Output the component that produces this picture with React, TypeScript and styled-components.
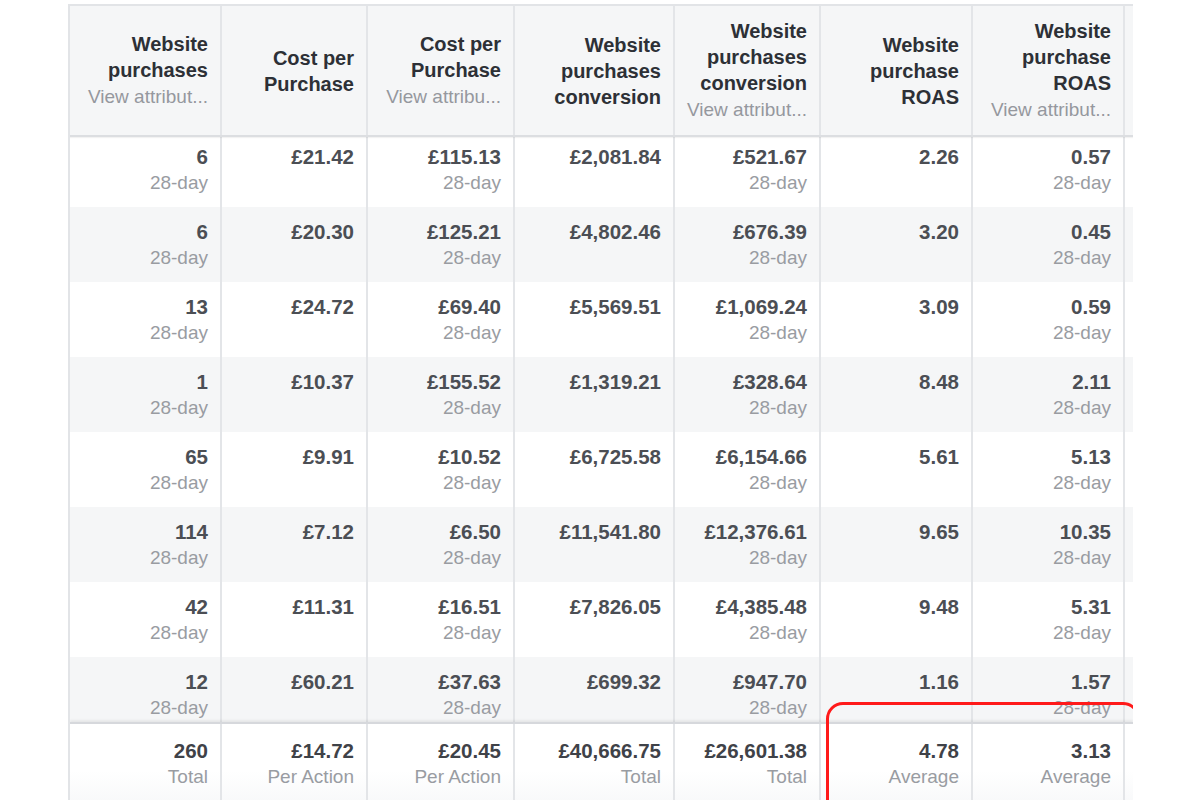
import React from "react";
import styled, { createGlobalStyle } from "styled-components";

const Global = createGlobalStyle`
  html, body { margin: 0; padding: 0; background: #ffffff; }
  body { font-family: "Liberation Sans", Arial, sans-serif; }
`;

const COLS = "152px 146px 147px 160px 146px 152px 152px 1fr";

const Page = styled.div`
  width: 1200px;
  height: 800px;
  overflow: hidden;
  padding: 4px 0 0 68px;
  box-sizing: border-box;
`;

const Table = styled.div`
  position: relative;
  width: 1065px;
  height: 796px;
  overflow: hidden;
  border-top: 2px solid #e2e4e7;
  border-left: 2px solid #e2e4e7;
  box-sizing: border-box;
`;

const HeaderRow = styled.div`
  display: grid;
  grid-template-columns: ${COLS};
  height: 131px;
  background: #f5f6f7;
  border-bottom: 2px solid #dcdee1;
  box-shadow: 0 1px 1px rgba(0, 0, 0, 0.05);
  box-sizing: border-box;
  position: relative;
  z-index: 1;
`;

const HeadCell = styled.div`
  display: flex;
  flex-direction: column;
  justify-content: center;
  align-items: flex-end;
  text-align: right;
  padding: 0 12px 0 8px;
  border-right: 2px solid #e3e5e8;
  box-sizing: border-box;
`;

const HeadTitle = styled.div`
  font-weight: 700;
  font-size: 20px;
  line-height: 26px;
  color: #2d3036;
`;

const HeadSub = styled.div`
  font-size: 19px;
  line-height: 27px;
  color: #95989e;
  white-space: nowrap;
`;

const Row = styled.div<{ $alt: boolean; $h: number; $pad: number }>`
  display: grid;
  grid-template-columns: ${COLS};
  height: ${(p) => p.$h}px;
  background: ${(p) => (p.$alt ? "#f5f6f7" : "#ffffff")};
  box-sizing: border-box;
  & > div {
    padding-top: ${(p) => p.$pad}px;
  }
`;

const Cell = styled.div`
  display: flex;
  flex-direction: column;
  align-items: flex-end;
  text-align: right;
  padding-right: 12px;
  border-right: 2px solid #e3e5e8;
  box-sizing: border-box;
`;

const Value = styled.div<{ $strong?: boolean }>`
  font-weight: 700;
  font-size: 20.5px;
  line-height: 26px;
  color: ${(p) => (p.$strong ? "#3f4248" : "#4b4e54")};
`;

const Sub = styled.div`
  font-size: 19px;
  line-height: 26px;
  color: #999ca2;
`;

const Footer = styled.div`
  display: grid;
  grid-template-columns: ${COLS};
  height: 80px;
  background: linear-gradient(#ffffff 60%, #f8f9fa);
  border-top: 2px solid #d6d8dc;
  box-shadow: 0 -2px 2px rgba(0, 0, 0, 0.06);
  box-sizing: border-box;
  position: relative;
  & > div {
    padding-top: 14px;
  }
`;

const Highlight = styled.div`
  position: absolute;
  left: 756px;
  top: 696px;
  width: 314px;
  height: 160px;
  border: 3px solid #ff1a1a;
  border-radius: 17px;
  box-sizing: border-box;
  pointer-events: none;
  z-index: 3;
`;

type Col = { title: string[]; sub?: boolean };

const headers: Col[] = [
  { title: ["Website", "purchases"], sub: true },
  { title: ["Cost per", "Purchase"] },
  { title: ["Cost per", "Purchase"], sub: true },
  { title: ["Website", "purchases", "conversion"] },
  { title: ["Website", "purchases", "conversion"], sub: true },
  { title: ["Website", "purchase", "ROAS"] },
  { title: ["Website", "purchase", "ROAS"], sub: true },
];

const subTexts = ["View attribut...", "", "View attribu...", "", "View attribut...", "", "View attribut..."];
const hasDay = [true, false, true, false, true, false, true];

const rows: string[][] = [
  ["6", "£21.42", "£115.13", "£2,081.84", "£521.67", "2.26", "0.57"],
  ["6", "£20.30", "£125.21", "£4,802.46", "£676.39", "3.20", "0.45"],
  ["13", "£24.72", "£69.40", "£5,569.51", "£1,069.24", "3.09", "0.59"],
  ["1", "£10.37", "£155.52", "£1,319.21", "£328.64", "8.48", "2.11"],
  ["65", "£9.91", "£10.52", "£6,725.58", "£6,154.66", "5.61", "5.13"],
  ["114", "£7.12", "£6.50", "£11,541.80", "£12,376.61", "9.65", "10.35"],
  ["42", "£11.31", "£16.51", "£7,826.05", "£4,385.48", "9.48", "5.31"],
  ["12", "£60.21", "£37.63", "£699.32", "£947.70", "1.16", "1.57"],
];

const totals: [string, string][] = [
  ["260", "Total"],
  ["£14.72", "Per Action"],
  ["£20.45", "Per Action"],
  ["£40,666.75", "Total"],
  ["£26,601.38", "Total"],
  ["4.78", "Average"],
  ["3.13", "Average"],
];

export default function App() {
  return (
    <Page>
      <Global />
      <Table>
        <HeaderRow>
          {headers.map((h, i) => (
            <HeadCell key={i}>
              {h.title.map((t) => (
                <HeadTitle key={t}>{t}</HeadTitle>
              ))}
              {h.sub && <HeadSub>{subTexts[i]}</HeadSub>}
            </HeadCell>
          ))}
          <HeadCell />
        </HeaderRow>
        {rows.map((r, ri) => (
          <Row
            key={ri}
            $alt={ri % 2 === 1}
            $h={ri === 0 ? 70 : ri === rows.length - 1 ? 65 : 75}
            $pad={ri === 0 ? 7 : 12}
          >
            {r.map((v, ci) => (
              <Cell key={ci}>
                <Value>{v}</Value>
                {hasDay[ci] && <Sub>28-day</Sub>}
              </Cell>
            ))}
            <Cell />
          </Row>
        ))}
        <Footer>
          {totals.map(([v, s], i) => (
            <Cell key={i}>
              <Value $strong>{v}</Value>
              <Sub>{s}</Sub>
            </Cell>
          ))}
          <Cell />
        </Footer>
        <Highlight />
      </Table>
    </Page>
  );
}
